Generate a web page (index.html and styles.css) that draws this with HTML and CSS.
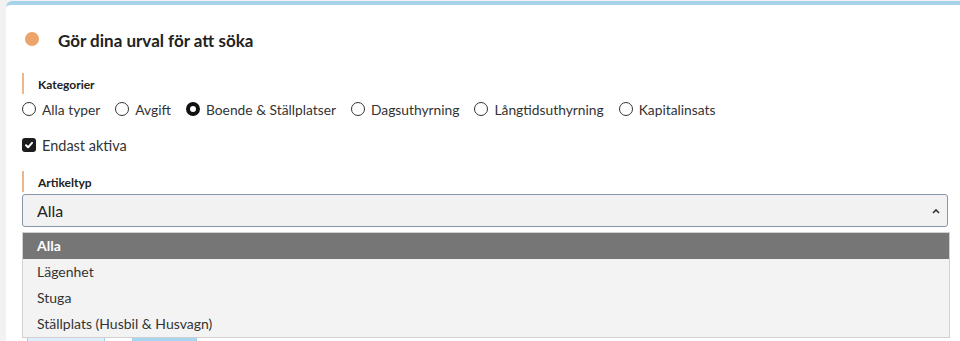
FILE: index.html
```html
<!DOCTYPE html>
<html lang="sv">

<head>
    <meta charset="UTF-8">
    <meta name="viewport" content="width=device-width, initial-scale=1.0">
    <title>Sök</title>
    <link rel="stylesheet" href="styles.css">
</head>

<body>
    <div class="card">
        <div class="card-title">
            <span class="dot"></span>
            <h2>Gör dina urval för att söka</h2>
        </div>

        <div class="field">
            <div class="field-label">Kategorier</div>
            <div class="radio-row">
                <label class="radio"><span class="radio-mark"></span>Alla typer</label>
                <label class="radio"><span class="radio-mark"></span>Avgift</label>
                <label class="radio checked"><span class="radio-mark"></span>Boende &amp; Ställplatser</label>
                <label class="radio"><span class="radio-mark"></span>Dagsuthyrning</label>
                <label class="radio"><span class="radio-mark"></span>Långtidsuthyrning</label>
                <label class="radio"><span class="radio-mark"></span>Kapitalinsats</label>
            </div>
        </div>

        <label class="checkbox">
            <span class="check-mark">
                <svg width="10" height="10" viewBox="0 0 10 10" fill="none" stroke="white" stroke-width="2" stroke-linecap="round" stroke-linejoin="round">
                    <path d="M2 5.2 4.1 7.3 8 2.8" />
                </svg>
            </span>
            Endast aktiva
        </label>

        <div class="field">
            <div class="field-label">Artikeltyp</div>
            <div class="select-wrap">
                <div class="select">
                    <span>Alla</span>
                    <svg width="8" height="6" viewBox="0 0 8 6" fill="none" stroke="#333" stroke-width="1.6">
                        <path d="M1 5 4 2 7 5" />
                    </svg>
                </div>
                <ul class="options">
                    <li class="selected">Alla</li>
                    <li>Lägenhet</li>
                    <li>Stuga</li>
                    <li>Ställplats (Husbil &amp; Husvagn)</li>
                </ul>
            </div>
        </div>

        <div class="actions">
            <button class="btn btn-light">Rensa</button>
            <button class="btn btn-primary">Sök</button>
        </div>
    </div>
</body>

</html>
```

FILE: styles.css
```css
* {
    margin: 0;
    padding: 0;
    box-sizing: border-box;
}

html,
body {
    height: 341px;
    overflow: hidden;
}

body {
    font-family: Lato, "Noto Sans", sans-serif;
    background: #f2f2f2;
    color: #2b2b2b;
}

.card {
    margin: 1px 0 0 6px;
    background: white;
    border-top: 4px solid #a6d3ea;
    border-top-left-radius: 6px;
    padding: 0 12px 0 16px;
    height: 340px;
    overflow: hidden;
}

.card-title {
    display: flex;
    align-items: center;
    height: 68px;
    padding-left: 3px;
}

.dot {
    flex-shrink: 0;
    width: 14px;
    height: 14px;
    border-radius: 50%;
    background: #eca46b;
    margin-right: 19px;
}

.card-title h2 {
    font-size: 17px;
    font-weight: 700;
    color: #222;
    position: relative;
    top: 1px;
}

.field-label {
    border-left: 2px solid #e9b88f;
    padding-left: 14px;
    font-size: 12px;
    font-weight: 700;
    color: #222;
    height: 21px;
    line-height: 23px;
}

.radio-row {
    display: flex;
    gap: 15px;
    margin-top: 4px;
    height: 22px;
    align-items: center;
}

.radio {
    display: flex;
    align-items: center;
    font-size: 13.8px;
    color: #333;
}

.radio-mark {
    flex-shrink: 0;
    width: 14px;
    height: 14px;
    border: 1.5px solid #333;
    border-radius: 50%;
    margin-right: 6px;
    background: white;
}

.radio.checked .radio-mark {
    border: 4px solid #111;
}

.checkbox {
    display: flex;
    align-items: center;
    font-size: 14.5px;
    color: #333;
    margin-top: 16px;
    height: 18px;
}

.check-mark {
    flex-shrink: 0;
    width: 14px;
    height: 14px;
    border-radius: 3px;
    background: #1c1c1c;
    margin-right: 6px;
    display: flex;
    align-items: center;
    justify-content: center;
}

.checkbox+.field {
    margin-top: 17px;
}

.select-wrap {
    position: relative;
    margin-top: 2px;
}

.select {
    height: 33px;
    border: 1px solid #8797ab;
    border-radius: 3px;
    background: #f2f2f2;
    display: flex;
    align-items: center;
    justify-content: space-between;
    padding: 0 7px 0 14px;
    font-size: 16px;
    color: #222;
}

.options {
    list-style: none;
    position: absolute;
    top: 38px;
    left: 0;
    width: 928px;
    background: #f3f3f3;
    border: 1px solid #d0d0d0;
    z-index: 2;
}

.options li {
    height: 26px;
    line-height: 26px;
    padding-left: 14px;
    font-size: 14px;
    color: #333;
}

.options li.selected {
    background: #767676;
    color: white;
    font-weight: 700;
}

.actions {
    display: flex;
    gap: 27px;
    margin-top: 84px;
    padding-left: 5px;
}

.btn {
    height: 36px;
    border: 1px solid #9fd0ea;
    border-radius: 4px;
    font-family: inherit;
    font-size: 14px;
    font-weight: 700;
}

.btn-light {
    width: 78px;
    background: #dceffa;
    color: #333;
}

.btn-primary {
    width: 65px;
    background: #a7d7f0;
    color: #222;
}
```
